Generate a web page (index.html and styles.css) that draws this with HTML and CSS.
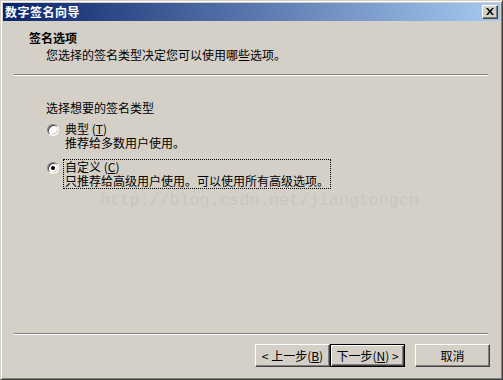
FILE: index.html
```html
<!DOCTYPE html>
<html lang="zh-CN">
<head>
<meta charset="utf-8">
<title>数字签名向导</title>
<link rel="stylesheet" href="styles.css">
</head>
<body>
<div class="window">
  <div class="titlebar">
    <span class="title">数字签名向导</span>
    <button class="close" type="button" aria-label="关闭">
      <svg width="8" height="7" viewBox="0 0 8 7"><path d="M0 0h2l2 2.5L6 0h2L5 3.5 8 7H6L4 4.5 2 7H0l3-3.5z" fill="#000"/></svg>
    </button>
  </div>
  <div class="header">
    <div class="h-title">签名选项</div>
    <div class="h-sub">您选择的签名类型决定您可以使用哪些选项。</div>
  </div>
  <div class="sep"></div>
  <div class="content">
    <div class="prompt">选择想要的签名类型</div>
    <div class="option">
      <span class="radio"></span>
      <div class="label">
        <div>典型 (<u>T</u>)</div>
        <div>推荐给多数用户使用。</div>
      </div>
    </div>
    <div class="option second">
      <span class="radio checked"></span>
      <div class="label focused">
        <div>自定义 (<u>C</u>)</div>
        <div>只推荐给高级用户使用。可以使用所有高级选项。</div>
      </div>
    </div>
  </div>
  <div class="sep"></div>
  <div class="footer">
    <button class="btn" type="button">&lt; 上一步(<u>B</u>)</button>
    <button class="btn default" type="button">下一步(<u>N</u>) &gt;</button>
    <button class="btn cancel" type="button">取消</button>
  </div>
  <div class="watermark">http://blog.csdn.net/jiangtongcn</div>
</div>
</body>
</html>
```

FILE: styles.css
```css
html, body {
  margin: 0;
  padding: 0;
  background: #d4d0c8;
}

body {
  font-family: "Noto Sans CJK SC", "Noto Sans", sans-serif;
  font-size: 12px;
  line-height: 14px;
  color: #000;
}

.window {
  position: relative;
  box-sizing: border-box;
  width: 503px;
  height: 380px;
  display: flex;
  flex-direction: column;
  background: #d4d0c8;
  border: 1px solid;
  border-color: #d4d0c8 #404040 #404040 #d4d0c8;
  box-shadow: inset 1px 1px #ffffff, inset -1px -1px #808080;
  padding: 2px;
}

.titlebar {
  height: 18px;
  flex: none;
  display: flex;
  align-items: center;
  justify-content: space-between;
  background: linear-gradient(to right, #0a246a, #a6caf0);
  padding: 0 2px 0 2px;
}

.title {
  color: #fff;
  font-weight: bold;
  font-size: 12px;
  line-height: 14px;
  letter-spacing: 0.5px;
}

.close {
  box-sizing: border-box;
  width: 16px;
  height: 14px;
  padding: 0;
  margin: 0;
  display: flex;
  align-items: center;
  justify-content: center;
  background: #d4d0c8;
  border: 1px solid;
  border-color: #ffffff #404040 #404040 #ffffff;
  box-shadow: inset -1px -1px #808080;
}

.close svg {
  display: block;
  margin: 0 0 1px 0;
}

.header {
  height: 53px;
  flex: none;
  box-sizing: border-box;
  padding: 10px 0 0 26px;
}

.h-title {
  font-weight: bold;
}

.h-sub {
  margin-top: 3px;
  padding-left: 17px;
}

.sep {
  flex: none;
  height: 1px;
  margin: 0 12px 0 11px;
  border-top: 1px solid #808080;
  border-bottom: 1px solid #ffffff;
  height: 0;
}

.content {
  flex: 1;
  box-sizing: border-box;
  padding: 25px 0 0 43px;
}

.prompt {
  margin-bottom: 6px;
}

.option {
  display: flex;
  align-items: flex-start;
  margin-left: 1px;
}

.option.second {
  margin-top: 8px;
}

.radio {
  position: relative;
  flex: none;
  box-sizing: border-box;
  width: 12px;
  height: 12px;
  margin-top: 3px;
  margin-right: 4px;
  border-radius: 50%;
  background: #ffffff;
  border: 1px solid;
  border-color: #808080 #ffffff #ffffff #808080;
  box-shadow: inset 1px 1px #404040, inset -1px -1px #d4d0c8;
}

.radio.checked::after {
  content: "";
  position: absolute;
  left: 3px;
  top: 3px;
  width: 4px;
  height: 4px;
  border-radius: 50%;
  background: #000;
}

.label {
  border: 1px dotted transparent;
  padding: 0 1px;
}

.label.focused {
  border-color: #000;
}

.footer {
  flex: none;
  display: flex;
  justify-content: flex-end;
  padding: 9px 10px 10px 0;
}

.btn {
  box-sizing: border-box;
  width: 75px;
  height: 23px;
  margin: 0;
  padding: 0;
  font-family: inherit;
  font-size: 12px;
  line-height: 14px;
  color: #000;
  background: #d4d0c8;
  border: 1px solid;
  border-color: #ffffff #404040 #404040 #ffffff;
  box-shadow: inset -1px -1px #808080, inset 1px 1px #d4d0c8;
}

.btn.default {
  border: 1px solid #000;
  box-shadow: inset 1px 1px #ffffff, inset -1px -1px #404040, inset -2px -2px #808080;
}

.btn.cancel {
  margin-left: 10px;
}

.watermark {
  position: absolute;
  left: 99px;
  top: 191px;
  font-family: "Liberation Mono", monospace;
  font-size: 16.6px;
  line-height: 18px;
  color: #c9c5bd;
  pointer-events: none;
}
```
